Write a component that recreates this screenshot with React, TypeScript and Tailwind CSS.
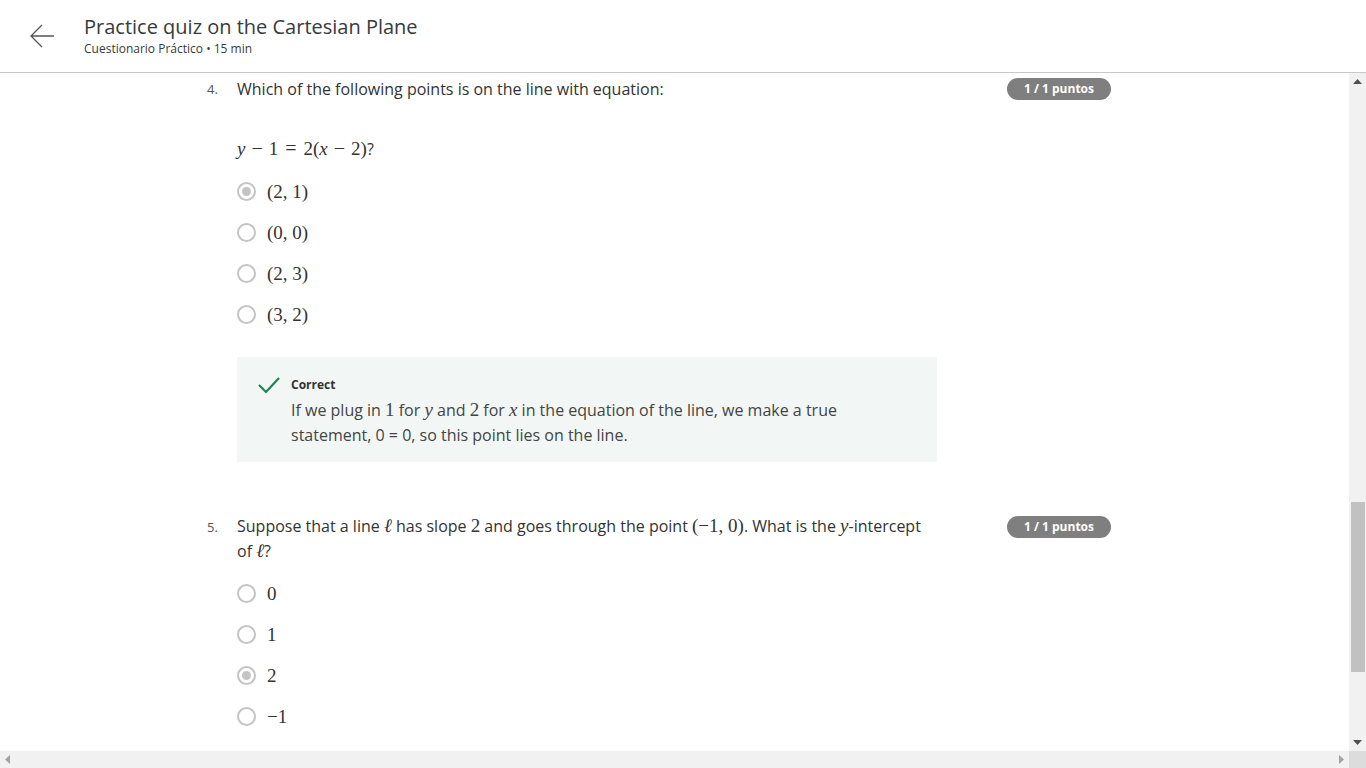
import React from "react";

const M = ({ children, i }: { children: React.ReactNode; i?: boolean }) => (
  <span
    className={`${i ? "italic" : ""} text-[19px] leading-none`}
    style={{ fontFamily: '"Liberation Serif", "DejaVu Serif", serif' }}
  >
    {children}
  </span>
);

const Op = ({ children, w }: { children: React.ReactNode; w?: boolean }) => (
  <span
    className={`text-[20px] leading-none ${w ? "mx-[7px]" : "mx-[6px]"}`}
    style={{ fontFamily: '"Liberation Serif", "DejaVu Serif", serif' }}
  >
    {children}
  </span>
);

const Radio = ({ checked }: { checked?: boolean }) => (
  <span className="w-[19px] h-[19px] rounded-full border-2 border-[#c4c4c4] flex items-center justify-center shrink-0">
    {checked && <span className="w-[9px] h-[9px] rounded-full bg-[#c4c4c4]" />}
  </span>
);

const Option = ({ checked, children }: { checked?: boolean; children: React.ReactNode }) => (
  <div className="flex items-center gap-[11px] h-[41px] text-[#333]">
    <Radio checked={checked} />
    <span className="leading-none">{children}</span>
  </div>
);

const Badge = () => (
  <div className="w-[104px] h-[22px] rounded-full bg-[#7f7f7f] text-white text-[12px] font-bold flex items-center justify-center">
    1 / 1 puntos
  </div>
);

export default function App() {
  return (
    <div
      className="h-screen w-full flex flex-col bg-white overflow-hidden"
      style={{ fontFamily: '"Open Sans", "Noto Sans", sans-serif' }}
    >
      <header className="h-[73px] shrink-0 border-b border-[#c8c8c8] flex items-start">
        <div className="w-[84px] flex justify-center pt-[23px]">
          <svg width="26" height="26" viewBox="0 0 26 26">
            <path d="M25 13H2M13 2L2 13l11 11" fill="none" stroke="#555" strokeWidth="1.3" />
          </svg>
        </div>
        <div className="pt-[13px]">
          <div className="text-[20px] text-[#373a3c] leading-[28px]">Practice quiz on the Cartesian Plane</div>
          <div className="text-[12px] text-[#373a3c] leading-[14px] mt-[1px]">Cuestionario Práctico • 15 min</div>
        </div>
      </header>
      <div className="flex-1 flex min-h-0">
        <div className="flex-1 overflow-hidden pl-[207px] pt-[5px]">
          {/* Question 4 */}
          <div className="flex">
            <div className="w-[30px] text-[13px] text-[#555] pt-[2px]">4.</div>
            <div className="w-[700px]">
              <div className="text-[16px] text-[#333] leading-[22px]">
                Which of the following points is on the line with equation:
              </div>
              <div className="mt-[38px] text-[#333] leading-[22px] flex items-baseline">
                <M i>y</M>
                <Op>−</Op>
                <M>1</M>
                <Op w>=</Op>
                <M>2(</M>
                <M i>x</M>
                <Op>−</Op>
                <M>2)</M>
                <span className="text-[16px]">?</span>
              </div>
              <div className="mt-[11px]">
                <Option checked>
                  <M>(2, 1)</M>
                </Option>
                <Option>
                  <M>(0, 0)</M>
                </Option>
                <Option>
                  <M>(2, 3)</M>
                </Option>
                <Option>
                  <M>(3, 2)</M>
                </Option>
              </div>
              <div className="mt-[22px] bg-[#f2f7f5] h-[105px] flex pt-[18px]">
                <div className="w-[54px] flex justify-end pr-[10px] pt-[1px]">
                  <svg width="24" height="18" viewBox="0 0 24 18">
                    <path d="M2 9l7 7L22 2" fill="none" stroke="#1f8354" strokeWidth="2.2" />
                  </svg>
                </div>
                <div>
                  <div className="text-[12px] font-bold text-[#333] leading-[18px] mt-[1px]">Correct</div>
                  <div className="text-[16px] text-[#444] leading-[25px] mt-[4px]">
                    If we plug in <M>1</M> for <M i>y</M> and <M>2</M> for <M i>x</M> in the equation of the line, we make a true
                    <br />
                    statement, 0 = 0, so this point lies on the line.
                  </div>
                </div>
              </div>
            </div>
            <div className="ml-[70px]">
              <Badge />
            </div>
          </div>

          {/* Question 5 */}
          <div className="flex mt-[54px]">
            <div className="w-[30px] text-[13px] text-[#555] pt-[2px]">5.</div>
            <div className="w-[700px]">
              <div className="text-[16px] text-[#333] leading-[25px] -mt-[2px]">
                Suppose that a line <M i>ℓ</M> has slope <M>2</M> and goes through the point <M>(−1, 0)</M>. What is the{" "}
                <M i>y</M>-intercept of <M i>ℓ</M>?
              </div>
              <div className="mt-[9px]">
                <Option>
                  <M>0</M>
                </Option>
                <Option>
                  <M>1</M>
                </Option>
                <Option checked>
                  <M>2</M>
                </Option>
                <Option>
                  <M>−1</M>
                </Option>
              </div>
            </div>
            <div className="ml-[70px]">
              <Badge />
            </div>
          </div>
        </div>
        {/* vertical scrollbar */}
        <div className="w-[17px] shrink-0 bg-[#f1f1f1] flex flex-col items-center">
          <div className="h-[17px] flex items-center justify-center">
            <svg width="9" height="5" viewBox="0 0 9 5">
              <path d="M0 5L4.5 0 9 5z" fill="#505050" />
            </svg>
          </div>
          <div className="h-[412px]" />
          <div className="w-[14px] h-[170px] bg-[#c1c1c1]" />
          <div className="flex-1" />
          <div className="h-[17px] flex items-center justify-center">
            <svg width="9" height="5" viewBox="0 0 9 5">
              <path d="M0 0L4.5 5 9 0z" fill="#505050" />
            </svg>
          </div>
        </div>
      </div>
      {/* horizontal scrollbar */}
      <div className="h-[17px] shrink-0 flex">
        <div className="flex-1 bg-[#f1f1f1] flex items-center justify-between px-[5px]">
          <svg width="5" height="9" viewBox="0 0 5 9">
            <path d="M5 0L0 4.5 5 9z" fill="#a3a3a3" />
          </svg>
          <svg width="5" height="9" viewBox="0 0 5 9">
            <path d="M0 0L5 4.5 0 9z" fill="#a3a3a3" />
          </svg>
        </div>
        <div className="w-[17px] bg-[#dcdcdc]" />
      </div>
    </div>
  );
}
